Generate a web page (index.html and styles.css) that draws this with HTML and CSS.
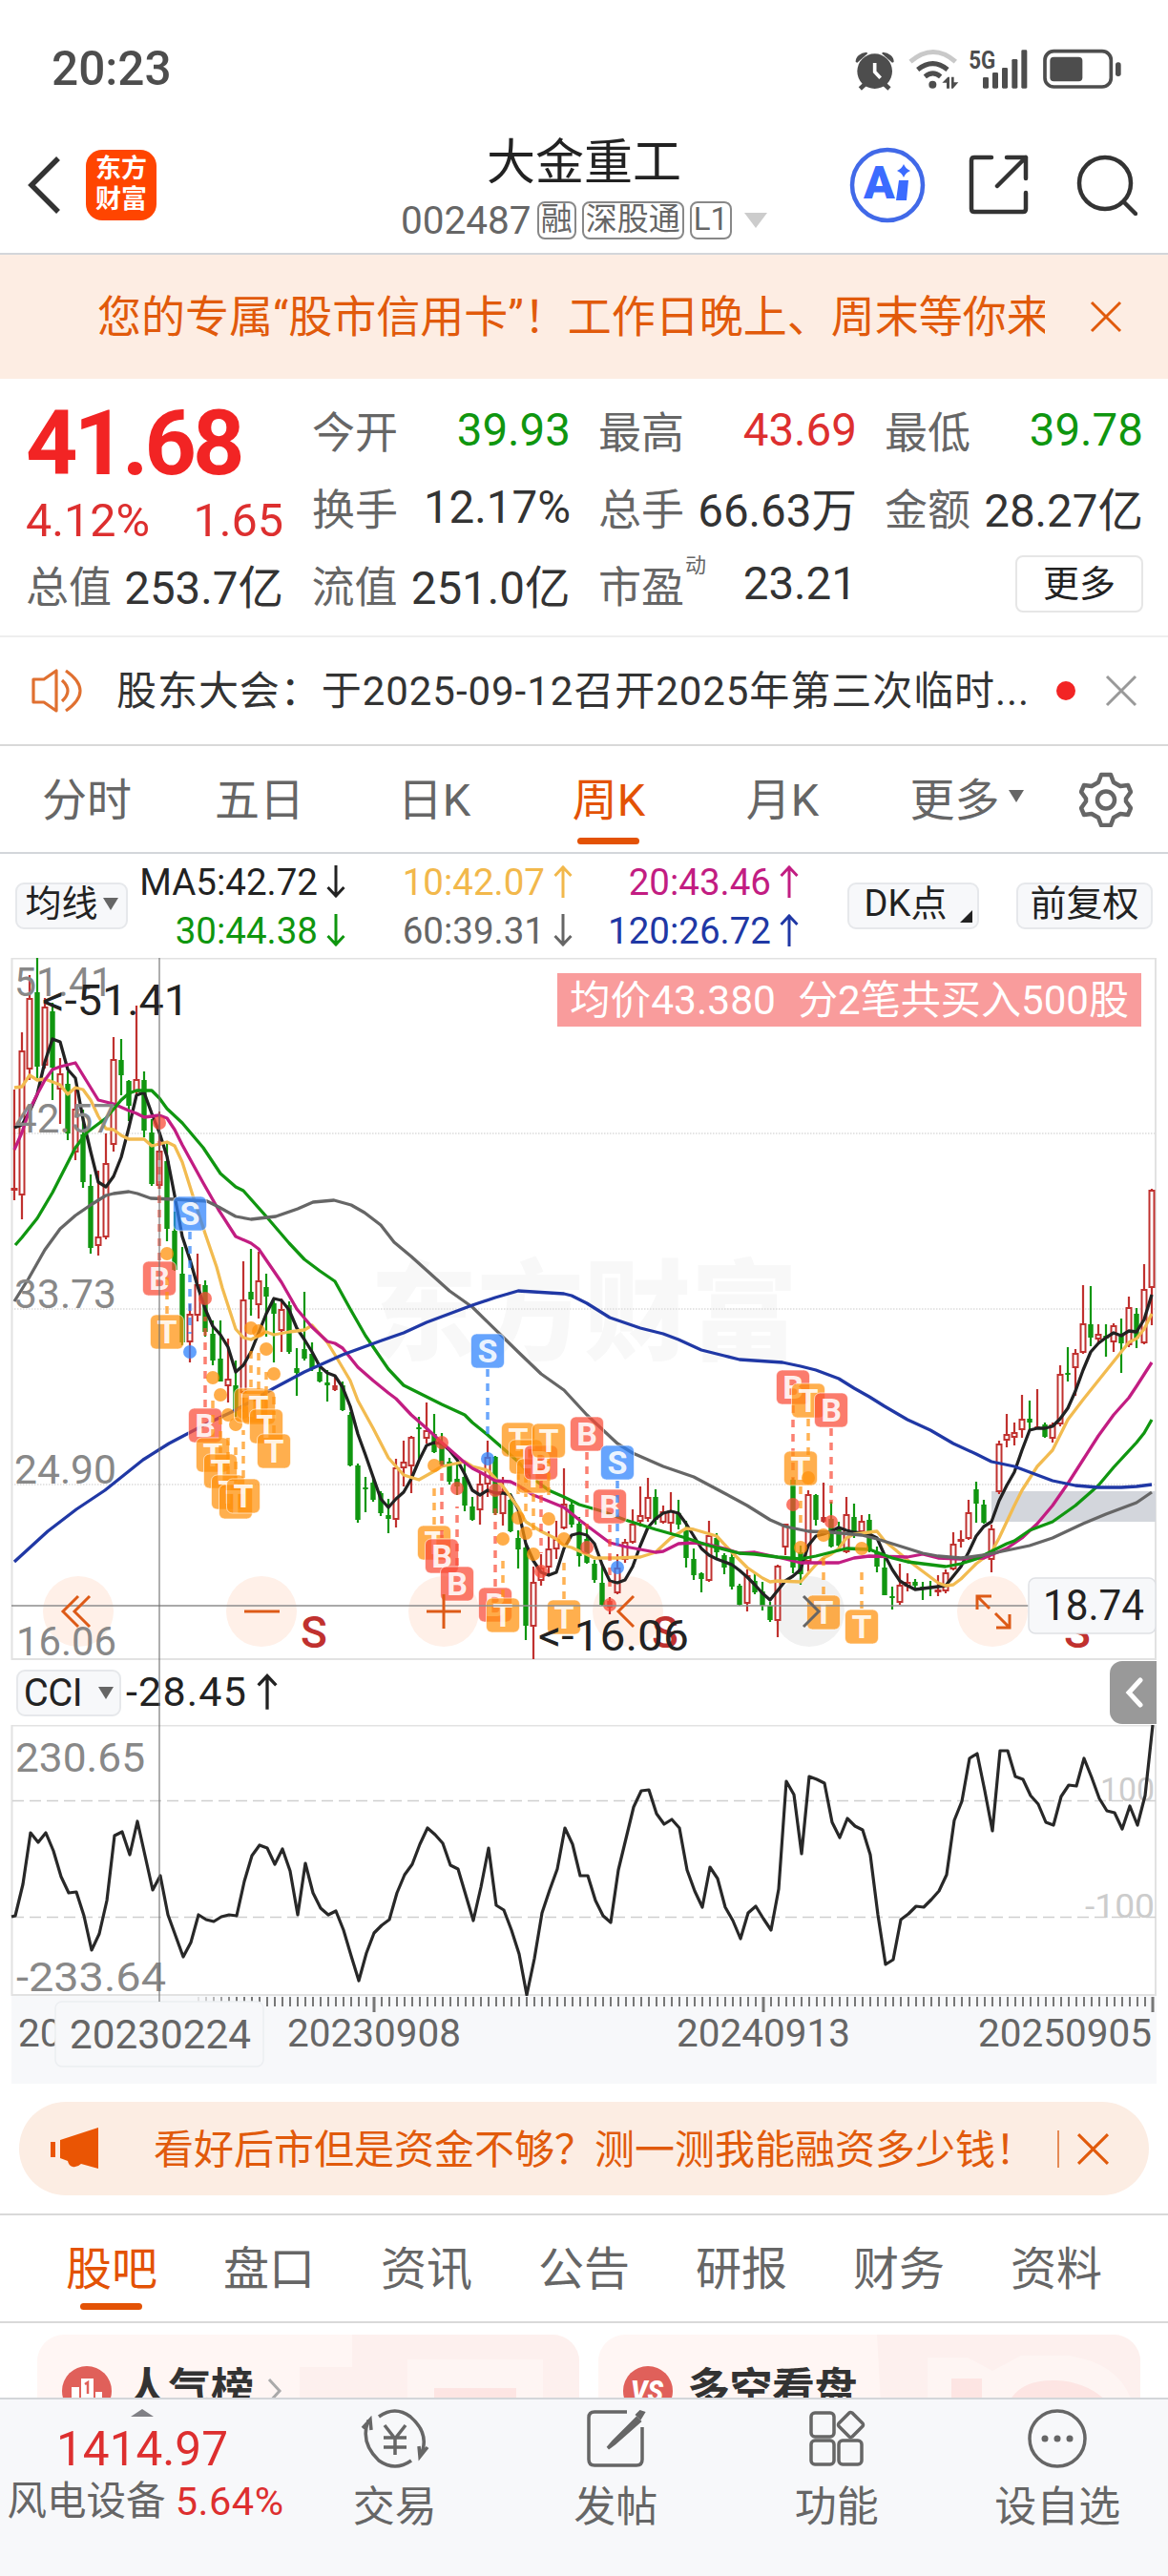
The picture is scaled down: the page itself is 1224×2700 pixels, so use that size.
FILE: index.html
```html
<!DOCTYPE html>
<html lang="zh-CN">
<head>
    <meta charset="UTF-8">
    <meta name="viewport" content="width=device-width, initial-scale=1.0">
    <title>大金重工 002487</title>
    <link rel="stylesheet" href="styles.css">
</head>
<body>
    <div class="status-bar">
        <span class="clock">20:23</span>
        <svg class="status-icons" width="304" height="70" viewBox="0 0 912 210">
            <g fill="#4d4d4d" stroke="none">
                <circle cx="134" cy="113" r="55"/>
                <path d="M74 84a36 30 0 0 1 34-31l4 4-33 29zM194 84a36 30 0 0 0-34-31l-4 4 33 29z"/>
                <path d="M88 168l22-20M180 168l-22-20" stroke="#4d4d4d" stroke-width="14"/>
                <path d="M134 87v28l18 19" stroke="#fff" stroke-width="11" fill="none"/>
            </g>
            <g fill="none" stroke="#4d4d4d">
                <path d="M246 83q72-61 142 0" stroke="#c9c9c9" stroke-width="15"/>
                <path d="M269 108q48-38 94 0M292 130q25-21 49 0" stroke-width="15"/>
            </g>
            <g fill="#4d4d4d">
                <circle cx="316" cy="155" r="12"/>
                <path d="M346 149l18-18h5v36h-9v-18zM375 131h8v17h14l-17 19h-5z"/>
                <rect x="474" y="132" width="18" height="35" rx="4"/>
                <rect x="504" y="117" width="18" height="50" rx="4"/>
                <rect x="534" y="102" width="18" height="65" rx="4"/>
                <rect x="565" y="75" width="18" height="92" rx="4"/>
                <rect x="595" y="46" width="18" height="121" rx="4"/>
                <text class="net" x="430" y="104" textLength="84" lengthAdjust="spacingAndGlyphs">5G</text>
                <rect x="685" y="68" width="102" height="77" rx="12"/>
                <rect x="891" y="85" width="17" height="44" rx="8"/>
                <rect x="669" y="50" width="208" height="112" rx="28" fill="none" stroke="#4d4d4d" stroke-width="11"/>
            </g>
        </svg>
    </div>

    <header class="header">
        <div class="header-left">
            <svg width="36" height="62" viewBox="0 0 36 62"><path d="M32 3L4 31l28 28" fill="none" stroke="#333" stroke-width="5.500"/></svg>
            <div class="logo">东方<br>财富</div>
        </div>
        <div class="title">
            <h1>大金重工</h1>
            <div class="code">
                <span>002487</span>
                <span class="badge">融</span>
                <span class="badge">深股通</span>
                <span class="badge">L1</span>
                <i class="tri tri-light"></i>
            </div>
        </div>
        <div class="header-right">
            <svg width="80" height="80" viewBox="0 0 80 80">
                <circle cx="40" cy="40" r="37" fill="none" stroke="#4169e8" stroke-width="4.5"/>
                <text class="ai" x="15" y="54">A</text>
                <path d="M52 35h10l-2 21H49zM57 18q2 5 7 7-5 2-7 7-2-5-7-7 5-2 7-7z" fill="#3b6bff"/>
            </svg>
            <svg width="64" height="64" viewBox="0 0 64 64" fill="none" stroke="#333" stroke-width="4.5" stroke-linecap="round" stroke-linejoin="round">
                <path d="M24 3H6Q3 3 3 6v51q0 3 3 3h51q3 0 3-3V40M40 3h20v22M60 3L30 33"/>
            </svg>
            <svg width="64" height="64" viewBox="0 0 64 64" fill="none" stroke="#333" stroke-width="4.5" stroke-linecap="round">
                <circle cx="30" cy="30" r="27"/><path d="M50 50l12 12"/>
            </svg>
        </div>
    </header>

    <div class="promo">
        <div class="promo-text">您的专属“股市信用卡”！工作日晚上、周末等你来</div>
        <svg width="34" height="34" viewBox="0 0 34 34"><path d="M2 2l30 30M32 2L2 32" stroke="#e15a0b" stroke-width="3"/></svg>
    </div>

    <section class="quote">
        <div class="price">
            <div class="last">41.68</div>
            <div class="change"><span>4.12%</span><span>1.65</span></div>
        </div>
        <dl class="up-down">
            <div><dt>今开</dt><dd class="green">39.93</dd></div>
            <div><dt>最高</dt><dd class="red">43.69</dd></div>
            <div><dt>最低</dt><dd class="green">39.78</dd></div>
            <div><dt>换手</dt><dd>12.17%</dd></div>
            <div><dt>总手</dt><dd>66.63万</dd></div>
            <div><dt>金额</dt><dd>28.27亿</dd></div>
        </dl>
        <dl class="totals">
            <div><dt>总值</dt><dd>253.7亿</dd></div>
            <div><dt>流值</dt><dd>251.0亿</dd></div>
            <div><dt>市盈<sup>动</sup></dt><dd>23.21</dd></div>
            <button class="more">更多</button>
        </dl>
    </section>

    <div class="notice">
        <svg width="56" height="48" viewBox="0 0 56 48" fill="none" stroke="#e07030" stroke-width="3.2" stroke-linejoin="round">
            <path d="M3 12h11L27 3v42L14 36H3zM33 13q12 11 0 22M37 3q30 21 0 42"/>
        </svg>
        <span class="notice-text">股东大会：于2025-09-12召开2025年第三次临时...</span>
        <i class="dot"></i>
        <svg width="34" height="34" viewBox="0 0 34 34"><path d="M2 2l30 30M32 2L2 32" stroke="#999" stroke-width="3"/></svg>
    </div>

    <nav class="periods">
        <span>分时</span>
        <span>五日</span>
        <span>日K</span>
        <span class="active">周K</span>
        <span>月K</span>
        <span>更多<i class="tri tri-small"></i></span>
        <svg width="56" height="58" viewBox="0 0 56 58" fill="none" stroke="#666" stroke-width="4.5" stroke-linejoin="round">
            <path d="M23 3h10l3 8 7 4 8-1 3 7-5 7v3l5 7-3 7-8-1-7 4-3 8H23l-3-8-7-4-8 1-3-7 5-7v-3l-5-7 3-7 8 1 7-4z"/>
            <circle cx="28" cy="29.500" r="9"/>
        </svg>
    </nav>

    <div class="ma-bar">
        <button class="chip">均线<i class="tri tri-small"></i></button>
        <div class="ma-grid">
            <span class="ma5">MA5:42.72<svg class="arrow down"><use href="#arrow"/></svg></span>
            <span class="ma10">10:42.07<svg class="arrow"><use href="#arrow"/></svg></span>
            <span class="ma20">20:43.46<svg class="arrow"><use href="#arrow"/></svg></span>
            <span class="ma30">30:44.38<svg class="arrow down"><use href="#arrow"/></svg></span>
            <span class="ma60">60:39.31<svg class="arrow down"><use href="#arrow"/></svg></span>
            <span class="ma120">120:26.72<svg class="arrow"><use href="#arrow"/></svg></span>
        </div>
        <button class="chip dk">DK点<svg class="corner" width="13" height="13" viewBox="0 0 13 13"><path d="M13 0v13H0z" fill="#222"/></svg></button>
        <button class="chip">前复权</button>
    </div>

    <section class="charts">
        <svg id="kline" class="kline" width="1224" height="736" viewBox="0 1004 1224 736"></svg>
        <div class="cci-bar">
            <button class="chip cci-chip">CCI<i class="tri tri-small"></i></button>
            <span class="cci-value">-28.45<svg class="arrow"><use href="#arrow"/></svg></span>
            <div class="expand"><svg width="20" height="32" viewBox="0 0 20 32"><path d="M16 3L4 16l12 13" fill="none" stroke="#fff" stroke-width="5" stroke-linecap="round"/></svg></div>
        </div>
        <svg id="cci" class="cci" width="1224" height="284" viewBox="0 1808 1224 284"></svg>
        <svg id="axis" class="axis" width="1200" height="92" viewBox="12 2092 1200 92"></svg>
        <div class="cross-v"></div>
    </section>

    <div class="margin-ad">
        <svg width="50" height="44" viewBox="0 0 50 44" fill="#ea5504"><path d="M0 15h5v16H0zM10 13L50 0v43l-18-5q-4 4-9 3-4-1-5-6l-8-3z"/></svg>
        <span class="ad-text">看好后市但是资金不够？测一测我能融资多少钱！</span>
        <i class="ad-sep"></i>
        <svg width="35" height="35" viewBox="0 0 34 34"><path d="M2 2l30 30M32 2L2 32" stroke="#e15a0b" stroke-width="3"/></svg>
    </div>

    <nav class="sections">
        <span class="active">股吧</span>
        <span>盘口</span>
        <span>资讯</span>
        <span>公告</span>
        <span>研报</span>
        <span>财务</span>
        <span>资料</span>
    </nav>

    <div class="cards">
        <div class="card">
            <svg class="card-bg" width="568" height="90" viewBox="0 0 568 90"><path d="M330 0h238v90H275V34h55z" fill="#fdf0ee"/><path d="M388 26h142v64H388z" fill="#fef5f3"/><path d="M416 56h86v34h-86z" fill="#fde5e3"/></svg>
            <svg width="52" height="52" viewBox="0 0 52 52"><circle cx="26" cy="26" r="26" fill="#e0605a"/><path d="M10 22h8v22h-8zM20 13h13v31H20zM35 27h7v17h-7z" fill="#fff"/><path d="M24 19l3-2v12" fill="none" stroke="#e0605a" stroke-width="2.500"/></svg>
            <b>人气榜</b>
            <svg width="16" height="28" viewBox="0 0 16 28"><path d="M2 2l11 12L2 26" fill="none" stroke="#aaa" stroke-width="3"/></svg>
        </div>
        <div class="card">
            <svg class="card-bg" width="568" height="90" viewBox="0 0 568 90"><path d="M292 0h276v90H297z" fill="#fdf0ee"/><path d="M345 24h42l26 14 30-16h50q65 10 70 68H345z" fill="#fef5f3"/><path d="M370 46h32v44h-32zM425 90q5-44 55-42 45 2 68 42z" fill="#fde5e3"/></svg>
            <svg width="52" height="52" viewBox="0 0 52 52"><circle cx="26" cy="26" r="26" fill="#e0605a"/><text class="vs" x="8" y="37" textLength="34" lengthAdjust="spacingAndGlyphs">VS</text></svg>
            <b>多空看盘</b>
        </div>
    </div>

    <footer class="toolbar">
        <div class="sector">
            <i class="tri-up"></i>
            <div class="sector-index">1414.97</div>
            <div class="sector-name">风电设备 <span>5.64%</span></div>
        </div>
        <div class="tool">
            <svg width="72" height="64" viewBox="0 0 72 64" fill="none" stroke="#666" stroke-width="3.5">
                <path d="M19 9Q36-3 52 9q22 19 10 42M53 55q-17 12-34 0-20-19-11-42M2 21l8-9 1 11M70 41l-8 10-1-11"/>
                <path d="M25 18l11 14 11-14M36 32v17M24 31h24M24 41h24"/>
            </svg>
            <span>交易</span>
        </div>
        <div class="tool">
            <svg width="64" height="64" viewBox="0 0 64 64" fill="none" stroke="#666" stroke-width="3.500">
                <path d="M44 4H10Q4 4 4 10v44q0 6 6 6h44q6 0 6-6V20"/>
                <path d="M54 11L30 35l-6 7 7-5 26-23z" fill="#666"/><path d="M58 4l-3 3 3 3 3-5z" fill="#666"/>
            </svg>
            <span>发帖</span>
        </div>
        <div class="tool">
            <svg width="64" height="64" viewBox="0 0 64 64" fill="none" stroke="#666" stroke-width="3.500">
                <rect x="5" y="5" width="24" height="25" rx="4"/><rect x="5" y="34" width="24" height="25" rx="4"/><rect x="34" y="34" width="24" height="25" rx="4"/>
                <path d="M45 5q1-1 3 0l11 11q1 2 0 3L48 30q-2 1-3 0L34 19q-1-1 0-3z"/>
            </svg>
            <span>功能</span>
        </div>
        <div class="tool">
            <svg width="64" height="64" viewBox="0 0 64 64" fill="none" stroke="#666" stroke-width="3.500">
                <circle cx="32" cy="32" r="29"/>
                <g fill="#666" stroke="none"><circle cx="19" cy="32" r="3.500"/><circle cx="32" cy="32" r="3.500"/><circle cx="45" cy="32" r="3.500"/></g>
            </svg>
            <span>设自选</span>
        </div>
    </footer>

    <svg width="0" height="0" class="defs">
        <symbol id="arrow" viewBox="0 0 20 34"><path d="M10 1v33M1.500 11L10 2l8.500 9" fill="none" stroke="currentColor" stroke-width="3"/></symbol>
    </svg>

    <script src="chart.js"></script>
</body>
</html>
```
FILE: styles.css
```css
* {
    box-sizing: border-box;
}

body {
    width: 1224px;
    height: 2700px;
    margin: 0;
    overflow: hidden;
    background: #fff;
    color: #333;
    font-family: Roboto, "Noto Sans CJK SC", sans-serif;
    display: flex;
    flex-direction: column;
}

body > * {
    flex-shrink: 0;
}

h1, dl, dd, dt {
    margin: 0;
    font-weight: 400;
}

svg {
    display: block;
    flex-shrink: 0;
}

button {
    font-family: inherit;
    color: #222;
    padding: 0;
}

.defs {
    position: absolute;
}

.red { color: #dd2f2f; }
.green { color: #0f960f; }

.tri {
    width: 0;
    height: 0;
    border: solid transparent;
    border-top-color: #666;
}

.tri-small {
    border-width: 13px 8px 0;
}

.tri-light {
    border-width: 16px 12px 0;
    border-top-color: #ccc;
    margin-left: 7px;
}

/* status bar */
.status-bar {
    height: 128px;
    padding: 16px 48px 0 54px;
    display: flex;
    justify-content: space-between;
    align-items: center;
}

.clock {
    font-size: 49.500px;
    font-weight: 500;
    color: #4d4d4d;
}

.net {
    font-size: 80px;
    font-weight: 700;
}

/* header */
.header {
    height: 139px;
    border-bottom: 2px solid #d3d6da;
    display: grid;
    grid-template-columns: 1fr 400px 1fr;
    align-items: center;
}

.header-left {
    display: flex;
    align-items: center;
    gap: 25px;
    padding: 0 0 6px 29px;
}

.logo {
    width: 74px;
    height: 74px;
    border-radius: 17px;
    background: #ff4500;
    color: #fff;
    font-size: 27px;
    font-weight: 700;
    line-height: 32px;
    padding-top: 4px;
    text-align: center;
}

.title h1 {
    font-size: 51px;
    line-height: 66px;
    text-align: center;
    color: #222;
    padding-top: 3px;
}

.code {
    display: flex;
    align-items: center;
    justify-content: center;
    font-size: 40.500px;
    color: #666;
    height: 55px;
    gap: 6px;
    white-space: nowrap;
}

.badge {
    height: 40px;
    line-height: 34px;
    padding: 0 2px;
    border: 2px solid #888;
    border-radius: 8px;
    font-size: 33px;
}

.header-right {
    display: flex;
    justify-content: flex-end;
    align-items: center;
    gap: 49px;
    padding: 0 32px 6px 0;
}

.header-right svg:first-child {
    margin-right: -4px;
}

.ai {
    font-size: 48px;
    font-weight: 900;
    fill: #3b6bff;
}

/* orange promo strip */
.promo {
    height: 130px;
    background: #fdede3;
    color: #e15a0b;
    padding: 0 48px 0 102px;
    display: flex;
    align-items: center;
    justify-content: space-between;
}

.promo-text {
    width: 993px;
    height: 76px;
    line-height: 72px;
    padding-top: 2px;
    overflow: hidden;
    white-space: nowrap;
    font-size: 46px;
}

/* quote */
.quote {
    height: 271px;
    padding: 25px 27px 0 27px;
    border-bottom: 2px solid #eee;
    display: grid;
    grid-template-columns: 270px 1fr;
    grid-template-rows: 150px 80px;
    column-gap: 30px;
}

.last {
    font-size: 95px;
    font-weight: 700;
    line-height: 86px;
    letter-spacing: -4px;
    color: #f22424;
}

.change {
    display: flex;
    justify-content: space-between;
    font-size: 48.500px;
    line-height: 60px;
    color: #dd2f2f;
    padding-top: 8px;
}

.up-down {
    display: grid;
    grid-template-columns: repeat(3, 271px);
    grid-auto-rows: 81px;
    column-gap: 29px;
    margin-top: -12px;
}

.totals {
    grid-column: 1 / 3;
    display: grid;
    grid-template-columns: 270px 271px 271px 1fr;
    column-gap: 29.500px;
    align-items: center;
}

.quote dl > div {
    display: flex;
    justify-content: space-between;
    align-items: center;
    font-size: 47.500px;
    white-space: nowrap;
}

.quote dt {
    position: relative;
    font-size: 45px;
    color: #666;
}

.quote sup {
    position: absolute;
    left: 91px;
    top: -2px;
    font-size: 22px;
    line-height: 30px;
}

.more {
    justify-self: end;
    width: 134px;
    height: 60px;
    margin-top: -1px;
    border: 2px solid #e6e6e6;
    border-radius: 8px;
    background: #fff;
    font-size: 38px;
    line-height: 48px;
}

/* notice */
.notice {
    height: 114px;
    border-bottom: 2px solid #d9d9d9;
    padding: 0 32px;
    display: flex;
    align-items: center;
}

.notice-text {
    flex: 1;
    padding: 0 0 7px 34px;
    font-size: 42px;
    letter-spacing: .95px;
    white-space: nowrap;
}

.dot {
    width: 20px;
    height: 20px;
    margin-right: 31px;
    border-radius: 50%;
    background: #f22424;
}

/* period tabs */
.periods {
    height: 113px;
    border-bottom: 2px solid #d3d6da;
    padding: 0 37px 0 0;
    display: grid;
    grid-template-columns: 182px 180px 186px 180px 184px 202px 1fr;
    align-items: center;
    justify-items: center;
    font-size: 47px;
    color: #666;
}

.periods svg {
    justify-self: end;
}

.periods span,
.sections span {
    position: relative;
    display: flex;
    align-items: center;
    padding-bottom: 7px;
}

.periods .tri {
    margin-left: 9px;
}

.active {
    color: #e35205;
}

.active::after {
    content: "";
    position: absolute;
    left: 50%;
    top: 78px;
    width: 65px;
    height: 7px;
    margin-left: -33px;
    border-radius: 4px;
    background: #e35205;
}

/* moving average row */
.ma-bar {
    height: 109px;
    padding: 0 16px;
    display: flex;
    align-items: center;
}

.chip {
    display: flex;
    align-items: center;
    justify-content: center;
    width: 143px;
    height: 49px;
    border: 2px solid #e6e8eb;
    border-radius: 9px;
    background: #f7f8fa;
    font-size: 38px;
    line-height: 45px;
}

.ma-bar .chip {
    padding-bottom: 4px;
}

.ma-bar .chip:first-child {
    width: 118px;
    gap: 5px;
}

.ma-bar .dk {
    position: relative;
    width: 138px;
    margin: 0 39px 0 51px;
    padding-right: 16px;
}

.corner {
    position: absolute;
    right: 5px;
    bottom: 5px;
}

.ma-grid {
    display: grid;
    grid-template-columns: 228px 238px 237px;
    grid-auto-rows: 51px;
    font-size: 38.500px;
}

.ma-grid span {
    display: flex;
    align-items: center;
    justify-content: flex-end;
}

.arrow {
    width: 20px;
    height: 34px;
    margin-left: 9px;
}

.down {
    transform: rotate(180deg);
}

.ma5 { color: #222; }
.ma10 { color: #f2b84b; }
.ma20 { color: #c21d82; }
.ma30 { color: #0f960f; }
.ma60 { color: #666; }
.ma120 { color: #2038a5; }

/* charts */
.charts {
    position: relative;
    height: 1180px;
}

.grid { stroke: #dcdcdc; stroke-width: 1.5; stroke-dasharray: 1.5 1.5; fill: none; }
.frame { stroke: #e2e2e2; stroke-width: 2; fill: none; }
.scale { font-size: 43px; fill: #888; }
.mark { font-size: 44px; fill: #222; }
.signal { font-size: 46px; font-weight: 500; fill: #c0312f; }
.watermark { font-size: 114px; font-weight: 900; fill: #f8f8f8; }
.tag { font-size: 42px; fill: #fff; }
.flag { font-size: 34px; font-weight: 700; fill: #fff; fill-opacity: .9; text-anchor: middle; }
.cross { stroke: #8c8c8c; stroke-width: 1.5; }
.level { stroke: #cfcfcf; stroke-width: 1.3; stroke-dasharray: 12 6; }
.level-text { font-size: 35px; fill: #ccc; }
.date { font-size: 40.500px; fill: #666; }
.date-now { font-size: 42px; fill: #666; }

.cross-v {
    position: absolute;
    left: 166px;
    top: 0;
    width: 2px;
    height: 1094px;
    background: rgba(110, 110, 110, .55);
}

.cci-bar {
    height: 68px;
    padding: 0 12px 0 17px;
    display: flex;
    align-items: center;
}

.cci-chip {
    width: 110px;
    gap: 17px;
    font-size: 40px;
    letter-spacing: -.5px;
}

.cci-value {
    display: flex;
    align-items: center;
    flex: 1;
    padding: 0 0 2px 5px;
    font-size: 43px;
    letter-spacing: 1.2px;
    color: #222;
}

.cci-value .arrow {
    width: 22px;
    height: 38px;
    margin-left: 10px;
}

.expand {
    width: 49px;
    height: 66px;
    padding: 17px 0 0 16px;
    border-radius: 13px 0 0 13px;
    background: #999;
}

.axis {
    margin-left: 12px;
    background: #f7f8fa;
}

/* margin ad */
.margin-ad {
    height: 98px;
    margin: 19px 20px;
    padding: 0 41px 0 33px;
    border-radius: 49px;
    background: #fcede3;
    color: #e15a0b;
    display: flex;
    align-items: center;
}

.ad-text {
    flex: 1;
    padding: 0 0 6px 58px;
    font-size: 42px;
}

.ad-sep {
    width: 2px;
    height: 39px;
    margin-right: 18px;
    background: #e58a55;
}

/* section tabs */
.sections {
    height: 115px;
    border: solid #d9d9d9;
    border-width: 2px 0;
    padding: 0 69px;
    display: flex;
    justify-content: space-between;
    align-items: center;
    font-size: 48px;
    color: #666;
}

.sections .active::after {
    top: 75px;
}

/* cards */
.cards {
    height: 78px;
    padding: 12px 29px 0 39px;
    display: flex;
    gap: 20px;
    overflow: hidden;
}

.card {
    position: relative;
    width: 568px;
    height: 120px;
    padding: 33px 26px;
    border-radius: 28px;
    background: #fff6f4;
    display: flex;
    align-items: flex-start;
    overflow: hidden;
    font-size: 45px;
    line-height: 50px;
}

.card b {
    position: relative;
    margin: 0 14px 0 15px;
    letter-spacing: -.5px;
}

.card > svg {
    position: relative;
}

.card > svg:last-child {
    margin-top: 12px;
}

.card > .card-bg {
    position: absolute;
    left: 0;
    top: 0;
}

.vs {
    font-size: 32px;
    font-weight: 900;
    font-style: italic;
    fill: #fff;
}

/* bottom toolbar */
.toolbar {
    height: 188px;
    border-top: 2px solid #d3d6da;
    background: #f7f8fa;
    display: grid;
    grid-template-columns: 298px repeat(4, 231.500px);
}

.sector {
    display: flex;
    flex-direction: column;
    align-items: center;
    white-space: nowrap;
    padding-top: 10px;
}

.tri-up {
    border: solid transparent;
    border-width: 0 12px 8px;
    border-bottom-color: #808085;
}

.sector-index {
    font-size: 49.500px;
    line-height: 70px;
    color: #dd2f2f;
    margin-top: -1px;
}

.sector-name {
    padding-left: 7px;
    font-size: 41.500px;
    line-height: 60px;
    color: #666;
    margin-top: -10px;
}

.sector-name span {
    color: #dd2f2f;
    letter-spacing: .5px;
}

.tool {
    display: flex;
    flex-direction: column;
    align-items: center;
    padding-top: 9px;
    font-size: 44px;
    line-height: 80px;
    color: #666;
}
```
FILE: chart.js
```js
const RED = '#c0312f';
const GREEN = '#109610';

// weekly bars: type (r/g/f = filled red), high, body top, body bottom, low
const bars = `r1142,1245,1248,1258 r1082,1101,1253,1278 r1022,1046,1121,1132 g1004,1040,1118,1130 r1046,1055,1117,1120
g1051,1060,1119,1153 r1109,1125,1142,1178 g1123,1136,1188,1195 r1142,1162,1208,1216 g1163,1189,1239,1245
g1231,1243,1308,1314 r1227,1296,1306,1316 r1188,1219,1297,1299 r1087,1110,1200,1207 g1089,1111,1127,1148
g1132,1133,1159,1175 r1054,1131,1145,1147 g1123,1132,1185,1192 g1173,1187,1241,1243 r1165,1206,1243,1246
g1198,1217,1288,1301 g1270,1290,1331,1332 g1307,1335,1407,1410 r1367,1377,1407,1428 r1314,1346,1379,1385
g1342,1347,1396,1401 g1384,1398,1426,1431 g1384,1424,1448,1448 r1403,1445,1453,1470 g1426,1452,1478,1485
r1322,1362,1460,1480 g1309,1354,1362,1379 r1312,1342,1368,1382 g1335,1349,1359,1401 g1363,1366,1377,1428
r1361,1372,1395,1417 g1364,1368,1417,1419 g1413,1434,1439,1463 g1354,1414,1424,1426 g1407,1419,1435,1437
g1431,1438,1448,1449 g1436,1449,1452,1469 f1443,1452,1457,1458 g1448,1452,1478,1479 g1480,1483,1536,1537
g1534,1536,1593,1596 g1548,1559,1561,1585 g1548,1554,1572,1574 g1563,1565,1586,1589 g1571,1588,1592,1607
r1529,1538,1593,1601 r1510,1532,1539,1558 r1505,1506,1537,1565 g1485,1496,1498,1529 r1470,1499,1508,1513
g1482,1503,1522,1523 g1502,1513,1535,1537 g1528,1532,1553,1556 g1535,1550,1558,1567 g1534,1548,1578,1584
g1569,1579,1593,1594 r1544,1555,1583,1598 r1510,1527,1556,1569 g1526,1527,1586,1588 r1548,1563,1587,1599
g1565,1572,1605,1606 g1604,1612,1624,1644 g1620,1622,1704,1719 r1642,1658,1705,1739 r1629,1643,1657,1662
r1605,1623,1643,1651 r1594,1613,1624,1634 r1539,1576,1602,1603 g1574,1577,1598,1601 g1590,1597,1631,1642
g1600,1613,1638,1639 g1635,1639,1656,1659 g1640,1659,1682,1683 f1674,1678,1685,1692 r1629,1643,1670,1671
r1613,1616,1635,1638 r1582,1597,1617,1618 r1558,1588,1595,1600 r1549,1569,1592,1595 g1561,1569,1593,1598
r1578,1584,1596,1597 r1564,1583,1597,1609 g1572,1586,1598,1603 g1594,1602,1633,1643 g1623,1634,1651,1656
g1648,1649,1655,1669 r1594,1609,1657,1658 g1607,1612,1627,1633 g1628,1630,1643,1650 g1628,1632,1663,1666
g1660,1662,1682,1683 r1645,1651,1681,1689 g1648,1657,1669,1671 g1658,1668,1683,1688 g1679,1683,1698,1700
r1640,1641,1699,1716 r1597,1597,1622,1630 g1549,1551,1643,1649 g1620,1627,1650,1661 r1562,1566,1637,1647
g1566,1567,1593,1599 f1554,1590,1595,1596 g1574,1592,1621,1622 g1595,1602,1620,1623 r1569,1587,1627,1628
g1576,1590,1605,1612 r1588,1594,1606,1608 g1587,1593,1624,1627 g1621,1627,1642,1648 g1633,1643,1672,1672
g1663,1673,1675,1687 r1639,1661,1680,1682 r1649,1658,1663,1668 g1655,1658,1662,1665 g1658,1663,1665,1677
g1657,1663,1665,1673 r1651,1666,1668,1673 r1645,1648,1668,1670 r1606,1618,1645,1646 r1604,1613,1616,1622
r1572,1585,1613,1614 g1553,1561,1576,1596 g1572,1577,1596,1597 r1598,1602,1635,1648 r1510,1513,1564,1566
r1482,1503,1510,1517 r1491,1501,1507,1515 r1462,1487,1499,1507 g1468,1487,1491,1498 f1456,1495,1497,1498
g1491,1493,1506,1507 r1491,1493,1508,1512 r1431,1440,1493,1495 g1412,1439,1441,1448 r1414,1418,1434,1463
r1347,1387,1418,1419 g1348,1388,1402,1411 r1388,1398,1404,1408 g1388,1400,1403,1422 r1387,1389,1407,1417
g1382,1400,1408,1439 r1359,1370,1410,1412 g1371,1377,1403,1413 r1325,1351,1408,1409 r1246,1247,1350,1389`.split(/\s+/);

// one value for each bar
const ma5 = [1182,1179,1165,1147,1113,1089,1092,1121,1130,1173,1207,1239,1244,1233,1213,1182,1148,1145,1167,1187,1212,1253,1296,1320,1348,1372,1390,1399,1412,1438,
    1431,1417,1397,1377,1361,1363,1373,1392,1404,1417,1432,1439,1442,1454,1474,1503,1525,1548,1571,1580,1571,1564,1550,1531,1515,1512,1513,1520,1530,1545,
    1562,1567,1562,1565,1565,1567,1582,1618,1636,1648,1651,1648,1623,1609,1607,1609,1618,1640,1657,1659,1656,1642,1620,1601,1592,1586,1584,1586,1597,1610,
    1623,1630,1634,1637,1640,1646,1653,1661,1670,1677,1667,1657,1652,1645,1620,1610,1608,1605,1601,1604,1606,1607,1608,1612,1630,1645,1657,1662,1666,1665,
    1664,1663,1662,1652,1642,1627,1610,1600,1595,1573,1557,1543,1520,1499,1497,1497,1495,1487,1476,1458,1436,1417,1408,1402,1397,1400,1395,1396,1383,1357];

const averages = {
    '#2038a5': '15,1637 50,1605 80,1582 110,1562 150,1530 177,1513 215,1493 247,1478 287,1455 319,1438 359,1420 400,1405 423,1397 447,1386 495,1368 519,1360 543,1353 591,1356 599,1358 615,1366 639,1381 671,1392 695,1398 711,1404 735,1415 759,1421 775,1425 820,1428 839,1432 855,1436 879,1445 895,1455 911,1464 927,1474 951,1488 975,1499 999,1513 1023,1524 1039,1532 1063,1537 1079,1543 1103,1552 1127,1557 1151,1559 1175,1559 1191,1558 1207,1556',
    '#666': '15,1364 30,1340 47,1310 63,1288 79,1274 95,1263 111,1253 119,1251 135,1249 144,1251 158,1256 183,1257 217,1259 229,1265 247,1275 263,1278 289,1275 312,1267 328,1260 350,1258 368,1263 382,1271 399,1284 413,1302 431,1317 471,1353 495,1370 543,1417 567,1440 591,1457 615,1483 631,1498 647,1513 663,1523 679,1530 695,1537 727,1548 759,1565 783,1578 807,1593 823,1600 847,1605 871,1606 903,1609 919,1613 935,1618 951,1623 967,1628 983,1631 1007,1633 1031,1630 1055,1625 1079,1620 1103,1612 1135,1597 1159,1587 1191,1575 1207,1564',
    '#f2bb50': '15,1140 23,1139 31,1127 39,1132 47,1131 63,1137 71,1147 79,1140 87,1142 95,1153 103,1170 111,1183 119,1184 127,1190 135,1194 151,1194 159,1201 175,1197 183,1201 191,1218 202,1253 215,1293 227,1328 233,1350 247,1393 255,1402 263,1404 279,1396 287,1399 303,1396 319,1394 327,1389 343,1407 351,1420 367,1447 375,1468 391,1497 407,1528 415,1537 423,1546 439,1551 455,1542 463,1537 487,1532 495,1537 511,1541 527,1558 543,1580 551,1595 567,1605 583,1613 591,1620 599,1622 623,1633 647,1633 671,1632 687,1627 703,1612 719,1602 727,1603 751,1610 767,1627 783,1643 799,1654 807,1658 815,1657 839,1658 855,1640 863,1633 871,1629 879,1623 887,1612 895,1608 919,1605 927,1615 951,1635 967,1647 983,1659 991,1662 999,1661 1007,1655 1023,1639 1039,1627 1047,1612 1063,1578 1071,1562 1087,1537 1103,1520 1119,1488 1135,1467 1159,1437 1183,1407 1191,1403 1199,1393 1207,1377',
    '#c21d82': '15,1205 23,1187 31,1163 39,1147 47,1132 55,1121 63,1118 71,1116 79,1114 87,1127 103,1153 119,1157 135,1164 143,1167 151,1171 167,1169 175,1172 183,1184 191,1200 213,1240 229,1268 247,1296 263,1303 271,1309 295,1344 311,1372 327,1391 343,1406 351,1408 359,1413 375,1433 391,1447 407,1460 415,1466 431,1483 447,1497 463,1512 487,1533 495,1539 503,1543 519,1552 535,1553 543,1557 559,1567 591,1580 607,1593 631,1611 639,1617 655,1621 671,1624 687,1627 695,1626 711,1618 727,1617 743,1619 759,1623 775,1628 791,1627 823,1634 839,1638 879,1638 895,1633 911,1631 951,1632 967,1629 983,1633 1007,1634 1031,1633 1055,1623 1071,1612 1087,1597 1103,1578 1119,1555 1135,1530 1151,1505 1167,1483 1183,1465 1191,1453 1207,1428',
    '#109610': '16,1305 23,1297 31,1287 39,1277 55,1250 79,1203 91,1187 111,1172 127,1153 135,1146 143,1143 159,1143 167,1151 175,1162 191,1177 213,1203 231,1230 247,1244 255,1248 279,1275 303,1303 319,1320 335,1332 351,1343 367,1372 383,1400 407,1435 423,1452 447,1464 463,1472 487,1483 495,1491 511,1504 527,1518 543,1532 559,1550 575,1562 591,1569 607,1577 631,1584 655,1593 687,1603 719,1612 743,1620 775,1628 791,1629 815,1632 839,1634 855,1631 871,1627 887,1623 911,1624 935,1633 951,1637 967,1639 991,1642 1007,1639 1023,1634 1039,1626 1055,1618 1063,1615 1079,1604 1103,1595 1127,1578 1151,1557 1167,1538 1191,1512 1199,1502 1207,1488'
};

// trades: letter, x, flag y, dot y
const trades = [
    ['B', 167, 1340, 1177], ['T', 175, 1396, 1314], ['S', 199, 1272, 1417], ['B', 215, 1494, 1361], ['T', 223, 1525, 1444],
    ['T', 231, 1542, 1462], ['T', 239, 1564, 1483], ['T', 247, 1574, 1493], ['T', 255, 1568, 1480], ['T', 263, 1473, 1392],
    ['T', 271, 1475, 1395], ['T', 279, 1495, 1414], ['T', 287, 1521, 1440], ['T', 455, 1617, 1536], ['B', 463, 1631, 1512],
    ['B', 479, 1660, 1560], ['S', 511, 1416, 1529], ['B', 519, 1682, 1562], ['T', 527, 1693, 1613], ['T', 543, 1509, 1591],
    ['T', 551, 1527, 1607], ['T', 559, 1547, 1629], ['B', 567, 1533, 1647], ['T', 575, 1510, 1592], ['T', 591, 1695, 1613],
    ['B', 615, 1503, 1622], ['B', 639, 1579, 1682], ['S', 647, 1533, 1643], ['B', 831, 1454, 1577], ['T', 839, 1539, 1622],
    ['T', 847, 1468, 1549], ['T', 863, 1690, 1609], ['B', 871, 1478, 1595], ['T', 903, 1705, 1623]
];
const flagColor = { B: '#fa4b37', T: '#ff920c', S: '#2d82fc' };

const cci = [2008,1975,1921,1931,1921,1940,1967,1984,1983,2008,2044,2027,1992,1924,1920,1944,1909,1945,1981,1966,2007,2029,2051,2036,2007,
    2012,2014,2009,2007,2008,1972,1945,1934,1937,1954,1938,1961,2007,1953,1984,2000,2007,2003,2023,2050,2076,2047,2026,2018,2012,
    1984,1965,1954,1933,1916,1923,1932,1955,1959,1986,2013,1978,1937,1997,2002,2023,2048,2091,2053,2005,1981,1959,1916,1933,1966,
    1966,1992,2008,2015,1960,1927,1894,1877,1876,1901,1912,1907,1916,1960,1982,1999,1957,1969,1999,2013,2032,2005,1998,2011,2023,
    1980,1867,1881,1943,1862,1865,1869,1910,1926,1906,1914,1918,1944,2007,2059,2054,2012,2006,1998,1999,1991,1982,1965,1908,1888,
    1843,1838,1877,1919,1835,1835,1862,1865,1882,1891,1910,1913,1883,1871,1872,1843,1863,1885,1898,1900,1917,1893,1913,1882,1808];

const barX = i => 15 + i * 8;

function line(points, color, width) {
    return `<polyline points="${points}" fill="none" stroke="${color}" stroke-width="${width}" stroke-linejoin="round"/>`;
}

function text(cls, x, y, str, width) {
    const fit = width ? ` textLength="${width}" lengthAdjust="spacingAndGlyphs"` : '';
    return `<text class="${cls}" x="${x}" y="${y}"${fit}>${str}</text>`;
}

function drawKline() {
    let s = text('watermark', 388, 1416, '东方财富', 448);
    s += '<path class="grid" d="M12 1188H1211M12 1372H1211M12 1556H1211"/>';
    s += '<rect class="frame" x="12.500" y="1004.500" width="1198.500" height="734.500"/>';
    [82, 274, 465, 658, 1040].forEach(x => { s += `<circle cx="${x}" cy="1689" r="37" fill="#fff0e8"/>`; });
    s += '<circle cx="848" cy="1689" r="37" fill="#f1f1f1"/>';
    s += '<rect x="1039" y="1563" width="172" height="32" fill="#d3d6dc"/>';

    bars.forEach((bar, i) => {
        const [high, top, bottom, low] = bar.slice(1).split(',').map(Number);
        const x = barX(i);
        const h = Math.max(bottom - top, 2);
        if (bar[0] === 'r') {
            s += `<path d="M${x} ${high}V${top}M${x} ${bottom}V${low}" stroke="${RED}" stroke-width="2.200"/>`;
            s += `<rect x="${x - 2.5}" y="${top + 1}" width="5" height="${Math.max(h - 2, 1)}" fill="#fff" stroke="${RED}" stroke-width="2"/>`;
        } else {
            const color = bar[0] === 'g' ? GREEN : RED;
            s += `<path d="M${x} ${high}V${low}" stroke="${color}" stroke-width="2.200"/>`;
            s += `<rect x="${x - 2.7}" y="${top}" width="5.400" height="${h}" fill="${color}"/>`;
        }
    });

    s += line(ma5.map((y, i) => barX(i) + ',' + y).join(' '), '#222', 3.3);
    for (const color of ['#f2bb50', '#c21d82', '#109610', '#666', '#2038a5']) {
        s += line(averages[color], color, 3.3);
    }

    trades.forEach(([letter, x, y, dot]) => {
        const color = flagColor[letter];
        const side = dot > y ? 1 : -1;
        s += `<path d="M${x} ${y + side * 19}V${dot - side * 19}" stroke="${color}" stroke-width="3.500" stroke-dasharray="8 7" opacity=".7"/>`;
        s += `<circle cx="${x}" cy="${dot}" r="7" fill="${color}" opacity=".75"/>`;
        s += `<rect x="${x - 17.5}" y="${y - 18}" width="35" height="36" rx="6" fill="${color}" fill-opacity=".73" stroke="#fff" stroke-opacity=".6"/>`;
        s += text('flag', x, y + 12, letter);
    });

    s += text('scale', 15, 1044, '51.41', 103) + text('scale', 15, 1187, '42.57', 106) + text('scale', 15, 1371, '33.73', 107)
        + text('scale', 15, 1555, '24.90', 107) + text('scale', 17, 1735, '16.06', 105);
    s += '<path class="cross" d="M12 1683H1078"/>';

    // chart buttons: back, zoom out, zoom in, left, right, full screen
    s += '<g fill="none" stroke="#dd5a17" stroke-width="3"><path d="M82 1673l-16 16 16 16M94 1673l-16 16 16 16M256 1689h37M447 1689h36M465 1671v36M664 1673l-16 16 16 16"/>'
        + '<path d="M1024 1687v-14h15M1025 1674l12 12M1044 1706h14v-14M1057 1705l-14-14"/></g>';
    s += '<path d="M842 1673l16 16-16 16" fill="none" stroke="#666" stroke-width="3"/>';
    s += text('signal', 315, 1727, 'S') + text('signal', 683, 1727, 'S') + text('signal', 1115, 1727, 'S');
    s += text('mark', 44, 1064, '&lt;-51.41', 154) + text('mark', 564, 1730, '&lt;-16.06', 158);
    s += '<rect x="584" y="1020" width="612" height="56" fill="#f99c9c"/>';
    s += text('tag', 597, 1063, '均价43.380', 216) + text('tag', 836, 1063, '分2笔共买入500股', 347);
    s += '<rect x="1078" y="1654" width="133" height="58" rx="7" fill="#f7f8fa" stroke="#dfe1e5" stroke-width="1.500"/>' + text('mark', 1093, 1698, '18.74', 106);
    document.getElementById('kline').innerHTML = s;
}

function drawCci() {
    let s = '<rect class="frame" x="12.500" y="1808.500" width="1198.500" height="282.500"/>';
    s += '<path class="level" d="M13 1887.500H1211M13 2009.500H1211"/>';
    s += text('scale', 16, 1857, '230.65', 136) + text('scale', 17, 2087, '-233.64', 157);
    s += text('level-text', 1153, 1888, '100', 57) + text('level-text', 1137, 2010, '-100', 73);
    s += line('12,2009 ' + cci.map((y, i) => (16 + i * 8) + ',' + y).join(' '), '#282828', 3.2);
    document.getElementById('cci').innerHTML = s;
}

function drawAxis() {
    let s = '';
    for (let x = 208; x <= 1208; x += 8) {
        const major = x === 392 || x === 800 || x === 1208;
        const fade = x < 248 ? (x - 200) / 48 : 1;
        s += `<path d="M${x} 2093V${major ? 2109 : 2103}" stroke="#777" stroke-width="${major ? 3 : 2}" opacity="${fade}"/>`;
    }
    s += text('date', 19, 2145, '20') + text('date', 301, 2145, '20230908', 182) + text('date', 709, 2145, '20240913', 182) + text('date', 1025, 2145, '20250905', 182);
    s += '<rect x="58" y="2098" width="218" height="68" rx="7" fill="#f7f8fa" stroke="#eceef1" stroke-width="1.500"/>';
    s += text('date-now', 73, 2147, '20230224', 190);
    document.getElementById('axis').innerHTML = s;
}

drawKline();
drawCci();
drawAxis();
```
